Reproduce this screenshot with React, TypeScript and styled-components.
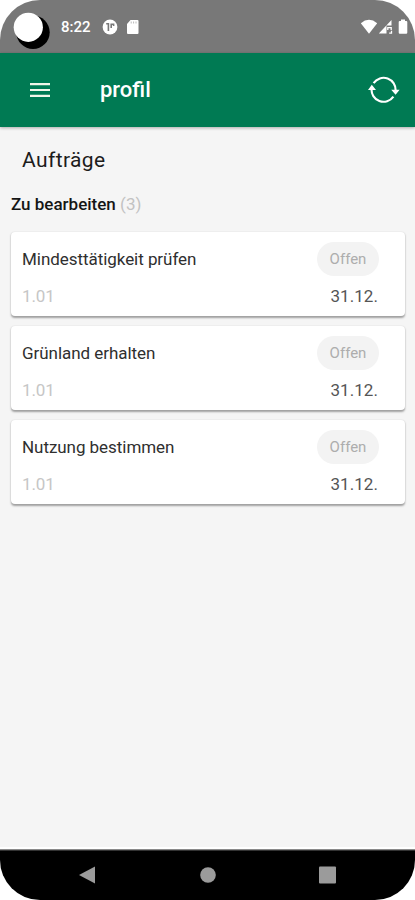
import React from 'react';
import styled, { createGlobalStyle } from 'styled-components';

const GlobalStyle = createGlobalStyle`
  * { box-sizing: border-box; }
  body { margin: 0; background: #fff; font-family: Roboto, sans-serif; }
`;

const Screen = styled.div`
  width: 415px;
  height: 900px;
  display: flex;
  flex-direction: column;
  overflow: hidden;
  background: #f5f5f5;
  border-radius: 40px;
`;

const StatusBar = styled.div`
  flex: none;
  height: 53px;
  display: flex;
  align-items: flex-start;
  background: #787878;
  color: #fff;
`;

const Camera = styled.svg`
  flex: none;
  width: 40px;
  height: 40px;
  margin: 10px 0 0 12px;
`;

const Clock = styled.span`
  width: 30px;
  margin: 18px 0 0 9px;
  font-size: 15px;
  line-height: 19px;
  font-weight: 500;
  white-space: nowrap;
`;

const StatusIcon = styled.svg<{ $w: number; $gap: number }>`
  flex: none;
  width: ${(p) => p.$w}px;
  height: 16px;
  margin: 19px 0 0 ${(p) => p.$gap}px;
`;

const Spacer = styled.div`
  flex: 1;
`;

const AppBar = styled.header`
  flex: none;
  height: 74px;
  display: flex;
  align-items: center;
  padding: 0 15px 1px 30px;
  background: #007a53;
  color: #fff;
  box-shadow: 0 1px 3px rgba(0, 0, 0, 0.3);
`;

const IconButton = styled.button`
  display: flex;
  padding: 0;
  border: 0;
  background: none;
  color: inherit;
`;

const AppTitle = styled.h1`
  flex: 1;
  margin: 0 0 0 50px;
  font-size: 22px;
  line-height: 28px;
  font-weight: 500;
`;

const Content = styled.main`
  flex: 1;
  padding: 20px 10px 0 11px;
`;

const Heading = styled.h2`
  margin: 0 0 0 11px;
  font-size: 21px;
  line-height: 26px;
  font-weight: 400;
  letter-spacing: 0.4px;
  color: #1c1c1c;
`;

const SectionTitle = styled.h3`
  margin: 20px 0 17px;
  font-size: 17px;
  line-height: 22px;
  font-weight: 500;
  color: #151515;
`;

const Count = styled.span`
  font-weight: 400;
  color: #c2c2c2;
`;

const CardList = styled.div`
  display: grid;
  gap: 10px;
`;

const Card = styled.article`
  height: 84px;
  padding: 10px 26px 0 11px;
  border-radius: 4px;
  background: #fff;
  box-shadow: 0 1.5px 2px rgba(0, 0, 0, 0.34), 0 0 2px rgba(0, 0, 0, 0.05);
`;

const CardRow = styled.div`
  display: flex;
  align-items: center;
  justify-content: space-between;
`;

const TaskName = styled.span`
  font-size: 17px;
  line-height: 34px;
  letter-spacing: -0.05px;
  color: #2f2f2f;
`;

const Chip = styled.span`
  width: 62px;
  height: 34px;
  border-radius: 17px;
  background: #f3f3f3;
  color: #adadad;
  font-size: 15px;
  line-height: 34px;
  text-align: center;
`;

const Detail = styled.span<{ $muted?: boolean }>`
  margin: 9px ${(p) => (p.$muted ? 0 : 1)}px 0 0;
  font-size: 17px;
  line-height: 22px;
  letter-spacing: ${(p) => (p.$muted ? -0.1 : 0.05)}px;
  color: ${(p) => (p.$muted ? '#c6c6c6' : '#555')};
`;

const NavBar = styled.nav`
  flex: none;
  height: 53px;
  display: flex;
  align-items: center;
  justify-content: space-between;
  padding: 1px 78px 0 78px;
  border-top: 2px solid #fff;
  background: #000;
  box-shadow: inset 0 1px 0 #8a8a8a, inset 0 2px 0 #333;
`;

const tasks = [
  { name: 'Mindesttätigkeit prüfen', code: '1.01', due: '31.12.' },
  { name: 'Grünland erhalten', code: '1.01', due: '31.12.' },
  { name: 'Nutzung bestimmen', code: '1.01', due: '31.12.' },
];

export default function App() {
  return (
    <>
      <GlobalStyle />
      <Screen>
        <StatusBar>
          <Camera viewBox="0 0 40 40">
            <circle cx="21" cy="22.3" r="16.7" fill="#000" />
            <circle cx="16.3" cy="17.3" r="14.6" fill="#fff" />
          </Camera>
          <Clock>8:22</Clock>
          <StatusIcon $w={16} $gap={11} viewBox="0 0 16 16">
            <circle cx="8" cy="8" r="7.4" fill="#fff" />
            <path d="M4.2 4.8H6.4V12M9.2 9V5.2H11.6V7" stroke="#787878" strokeWidth="1.6" fill="none" />
          </StatusIcon>
          <StatusIcon $w={13} $gap={8} viewBox="0 0 13 16">
            <path d="M4.5 1H11.5Q12.5 1 12.5 2V14Q12.5 15 11.5 15H2Q1 15 1 14V5Z" fill="#fff" />
            <path d="M5.2 2.5v2M7.6 2.5v2M10 2.5v2" stroke="#bbb" strokeWidth="1" />
          </StatusIcon>
          <Spacer />
          <StatusIcon $w={18} $gap={0} viewBox="0 0 18 16">
            <path d="M.8 4.2Q9-2.5 17.2 4.2L9 14.7Z" fill="#fff" />
          </StatusIcon>
          <StatusIcon $w={15} $gap={0} viewBox="0 0 15 16">
            <path d="M13.5 1V6.5H8.5V14.5H.8Z" fill="#fff" />
            <path d="M9.8 11V8.6H13.2V11M11.2 14.2H13.5V11.8" stroke="#fff" strokeWidth="1.3" fill="none" />
          </StatusIcon>
          <StatusIcon $w={10} $gap={5} viewBox="0 0 10 16">
            <path d="M3 .5H7V2H8.2Q9.3 2 9.3 3V13.5Q9.3 14.7 8.2 14.7H1.8Q.7 14.7 .7 13.5V3Q.7 2 1.8 2H3Z" fill="#fff" />
          </StatusIcon>
          <StatusIcon $w={7} $gap={0} />
        </StatusBar>
        <AppBar>
          <IconButton aria-label="Menu">
            <svg width="20" height="14" viewBox="0 0 20 14">
              <path d="M0 1.2h20M0 7h20M0 12.8h20" stroke="#f2f7e8" strokeWidth="2.2" />
            </svg>
          </IconButton>
          <AppTitle>profil</AppTitle>
          <IconButton aria-label="Sync">
            <svg width="32" height="28" viewBox="0 0 32 28" fill="none" stroke="#fff" strokeWidth="2.1">
              <path d="M5.6 7.1A12 12 0 0 1 27.5 15M3.6 12.5A12 12 0 0 0 25.4 20.6" />
              <path d="M0 14 3.8 8.8 8 14ZM23.2 13.8H31.6L27.6 18.8Z" fill="#fff" stroke="none" />
            </svg>
          </IconButton>
        </AppBar>
        <Content>
          <Heading>Aufträge</Heading>
          <SectionTitle>Zu bearbeiten <Count>(3)</Count></SectionTitle>
          <CardList>
            {tasks.map((task) => (
              <Card key={task.name}>
                <CardRow>
                  <TaskName>{task.name}</TaskName>
                  <Chip>Offen</Chip>
                </CardRow>
                <CardRow>
                  <Detail $muted>{task.code}</Detail>
                  <Detail>{task.due}</Detail>
                </CardRow>
              </Card>
            ))}
          </CardList>
        </Content>
        <NavBar>
          <svg width="18" height="18" viewBox="0 0 18 18"><path d="M1 9 17 .5V17.5Z" fill="#9b9b9b" /></svg>
          <svg width="16" height="16" viewBox="0 0 16 16"><circle cx="8" cy="8" r="7.8" fill="#9b9b9b" /></svg>
          <svg width="18" height="18" viewBox="0 0 18 18"><rect x="0" y=".5" width="17" height="17" rx="1" fill="#9b9b9b" /></svg>
        </NavBar>
      </Screen>
    </>
  );
}
